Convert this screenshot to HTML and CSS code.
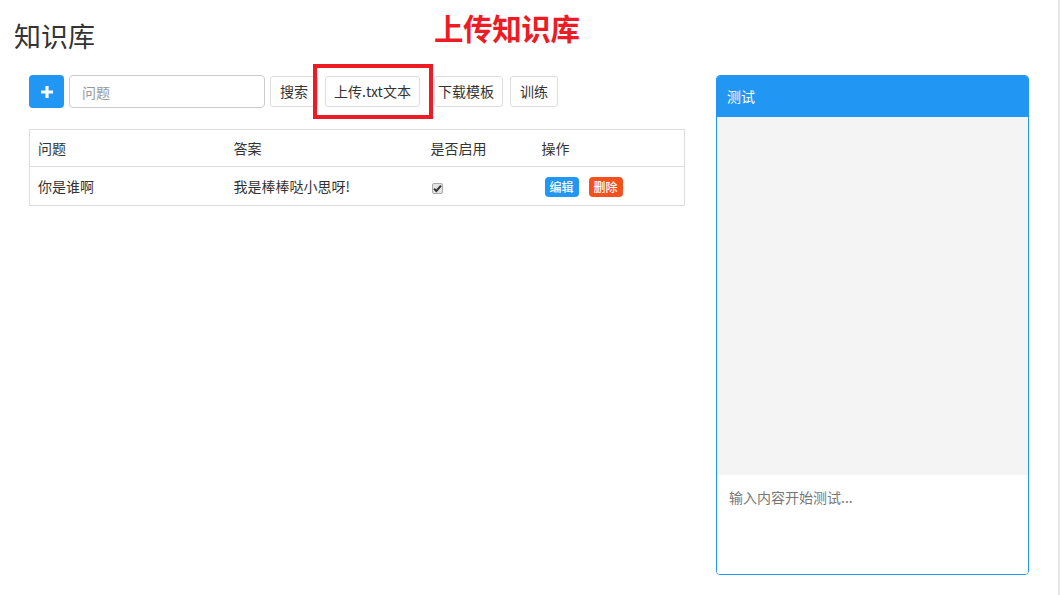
FILE: index.html
```html
<!DOCTYPE html>
<html lang="zh">
<head>
<meta charset="utf-8">
<title>知识库</title>
<link rel="stylesheet" href="styles.css">
</head>
<body>
<div class="page">
  <header class="top">
    <h1 class="title">知识库</h1>
    <div class="note">上传知识库</div>
  </header>
  <div class="main">
    <section class="left">
      <div class="toolbar">
        <button class="btn-add" type="button">
          <svg width="14" height="14" viewBox="0 0 14 14"><path d="M7 1v12M1 7h12" stroke="#fff" stroke-width="3.2" fill="none"/></svg>
        </button>
        <input class="search" type="text" placeholder="问题">
        <button class="btn btn-search" type="button">搜索</button>
        <div class="upload-wrap">
          <button class="btn btn-upload" type="button">上传.txt文本</button>
          <span class="mark"></span>
        </div>
        <button class="btn btn-tpl" type="button">下载模板</button>
        <button class="btn btn-train" type="button">训练</button>
      </div>
      <table class="grid">
        <thead>
          <tr><th class="c1">问题</th><th class="c2">答案</th><th class="c3">是否启用</th><th class="c4">操作</th></tr>
        </thead>
        <tbody>
          <tr>
            <td>你是谁啊</td>
            <td>我是棒棒哒小思呀!</td>
            <td><span class="check"><svg width="9" height="9" viewBox="0 0 9 9"><path d="M1 4.6l2.3 2.4L8 1.6" stroke="#333" stroke-width="2" fill="none"/></svg></span></td>
            <td><span class="tag tag-edit">编辑</span><span class="tag tag-del">删除</span></td>
          </tr>
        </tbody>
      </table>
    </section>
    <aside class="panel">
      <div class="panel-head">测试</div>
      <div class="panel-body"></div>
      <textarea class="panel-input" placeholder="输入内容开始测试..."></textarea>
    </aside>
  </div>
</div>
</body>
</html>
```
FILE: styles.css
```css
* { box-sizing: border-box; }
html, body { margin: 0; padding: 0; }
body {
  font-family: "Noto Sans CJK SC", "Noto Sans", "Liberation Sans", sans-serif;
  color: #333;
  background: #fff;
  font-size: 14px;
}
.page {
  width: 1060px;
  height: 595px;
  border-right: 2px solid #e6e6e6;
  overflow: hidden;
  position: relative;
}
.top {
  height: 75px;
  padding: 17px 0 0 14px;
}
.title {
  margin: 0;
  font-size: 27px;
  font-weight: normal;
  line-height: 38px;
  color: #333;
}
.note {
  position: absolute;
  left: 434px;
  top: 7px;
  font-size: 29.5px;
  font-weight: bold;
  color: #ed1c24;
  line-height: 40px;
  letter-spacing: -0.4px;
}
.main {
  display: flex;
  padding-left: 29px;
  gap: 31px;
}
.left { width: 656px; }
.toolbar {
  display: flex;
  align-items: center;
  height: 33px;
}
.btn-add {
  width: 35px;
  height: 33px;
  border: 0;
  border-radius: 4px;
  background: #2196f3;
  display: flex;
  align-items: center;
  justify-content: center;
  padding: 0;
}
.search {
  margin-left: 5px;
  width: 196px;
  height: 33px;
  border: 1px solid #ccc;
  border-radius: 4px;
  padding: 0 12px;
  font-family: inherit;
  font-size: 14px;
  color: #555;
  outline: none;
}
.search::placeholder { color: #999; }
.btn {
  height: 31px;
  margin-left: 5px;
  padding: 0;
  border: 1px solid #ddd;
  border-radius: 3px;
  background: #fff;
  font-family: inherit;
  font-size: 14px;
  color: #333;
  line-height: 29px;
  text-align: center;
}
.btn-search { width: 48px; }
.btn-upload { width: 95px; margin-left: 0; }
.btn-tpl { width: 69px; margin-left: 0; text-align: left; padding-left: 3px; }
.btn-train { width: 48px; margin-left: 7px; }
.upload-wrap {
  position: relative;
  margin-left: 7px;
  margin-right: 14px;
  display: flex;
}
.mark {
  position: absolute;
  left: -12px;
  top: -12px;
  width: 120px;
  height: 55px;
  border: 4px solid #ed1c24;
}
.grid {
  margin-top: 21px;
  width: 656px;
  border-collapse: collapse;
  border: 1px solid #ddd;
  font-size: 14px;
}
.grid th, .grid td {
  text-align: left;
  font-weight: normal;
  padding: 0 8px;
  vertical-align: middle;
}
.grid th { height: 37px; border-bottom: 1px solid #ddd; }
.grid td { height: 39px; }
.c1 { width: 196px; }
.c2 { width: 197px; }
.c3 { width: 111px; }
.check {
  display: inline-flex;
  align-items: center;
  justify-content: center;
  width: 11px;
  height: 11px;
  border: 1px solid #aaa;
  border-radius: 2px;
  background: #e4e4e4;
  vertical-align: middle;
  margin-left: 1px;
}
.tag {
  display: inline-block;
  height: 20px;
  line-height: 20px;
  width: 34px;
  text-align: center;
  border-radius: 4px;
  color: #fff;
  font-size: 12px;
  font-weight: 500;
  vertical-align: middle;
}
.tag-edit { background: #2196f3; margin-left: 3px; }
.tag-del { background: #f4511e; margin-left: 10px; }
.panel {
  width: 313px;
  height: 500px;
  border: 1px solid #2196f3;
  border-radius: 4px;
  display: flex;
  flex-direction: column;
  overflow: hidden;
}
.panel-head {
  height: 41px;
  background: #2196f3;
  color: #fff;
  font-size: 14px;
  line-height: 41px;
  padding-left: 10px;
  flex: none;
}
.panel-body {
  height: 358px;
  background: #f4f4f4;
  flex: none;
}
.panel-input {
  flex: 1;
  border: 0;
  resize: none;
  padding: 12px 12px;
  font-family: inherit;
  font-size: 14px;
  color: #555;
  outline: none;
}
.panel-input::placeholder { color: #777; }
```
